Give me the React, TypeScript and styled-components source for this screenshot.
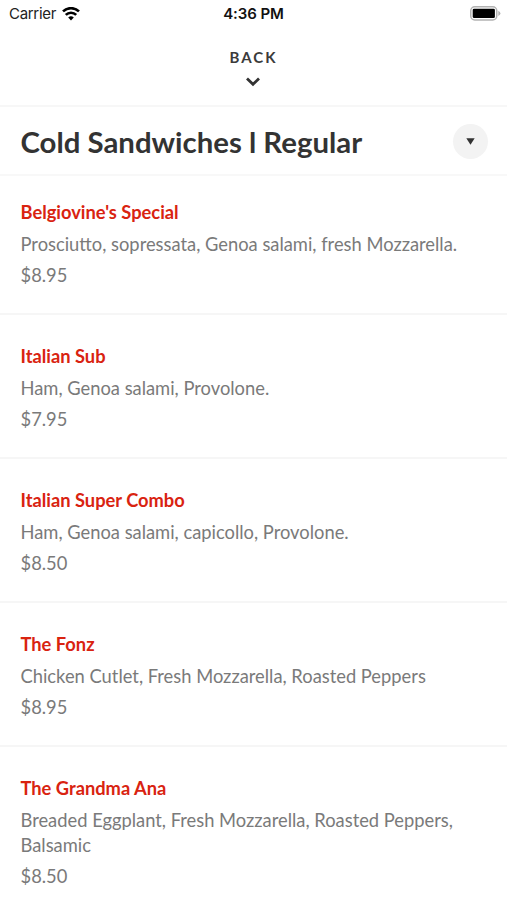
import React from "react";
import styled, { createGlobalStyle } from "styled-components";

const GlobalStyle = createGlobalStyle`
  * { box-sizing: border-box; }
  body { margin: 0; background: #fff; font-family: Lato, sans-serif; overflow: hidden; }
  h1, h2, p { margin: 0; }
`;
const Screen = styled.main`
  width: 507px;
  height: 900px;
  overflow: hidden;
  display: flex;
  flex-direction: column;
  background: #fff;
`;
const StatusBar = styled.header`
  height: 27px;
  flex: none;
  display: grid;
  grid-template-columns: 1fr auto 1fr;
  align-items: center;
  padding: 0 6px 0 9px;
  font: 15px Inter, sans-serif;
  color: #222;
`;
const Carrier = styled.div`
  display: flex;
  align-items: center;
  gap: 6px;
  letter-spacing: -0.3px;
`;
const Time = styled.div`
  font-weight: 600;
  letter-spacing: -0.08px;
  margin-right: 3px;
  color: #111;
`;
const Battery = styled.div`
  display: flex;
  justify-content: flex-end;
`;
const BackButton = styled.button`
  height: 80px;
  flex: none;
  border: 0;
  border-bottom: 2px solid #f7f7f7;
  padding: 20px 0 0;
  background: none;
  display: flex;
  flex-direction: column;
  align-items: center;
  gap: 10px;
  font: 700 15px/20px Lato, sans-serif;
  letter-spacing: 1.95px;
  color: #3b3b3b;

  svg { margin-right: 1px; }
`;
const TitleBar = styled.section`
  height: 69px;
  flex: none;
  display: flex;
  align-items: center;
  justify-content: space-between;
  padding: 1px 19px 0 20.5px;
  border-bottom: 2px solid #f8f8f8;
`;
const Title = styled.h1`
  font-size: 29.35px;
  line-height: 36px;
  padding-top: 1px;
  font-weight: 700;
  color: #333;
`;
const Dropdown = styled.button`
  width: 35px;
  height: 35px;
  border: 0;
  padding: 0;
  border-radius: 50%;
  background: #f3f3f3;
  display: grid;
  place-items: center;
`;
const Item = styled.article<{ $first?: boolean }>`
  height: ${(p) => (p.$first ? 139 : 144)}px;
  flex: none;
  padding: ${(p) => (p.$first ? 24 : 29)}px 20px 0 20.5px;
  border-bottom: 2px solid #f6f6f6;
  &:last-child { height: auto; border: 0; }
`;
const Name = styled.h2`
  font-size: 18.3px;
  line-height: 25px;
  font-weight: 700;
  color: #d92310;
`;
const Description = styled.p`
  margin-top: 7px;
  font-size: 18.33px;
  line-height: 25px;
  color: #7a7a7a;
`;
const Price = styled(Description)`
  margin-top: 6px;
`;

const items = [
  ["Belgiovine's Special", "Prosciutto, sopressata, Genoa salami, fresh Mozzarella.", "$8.95"],
  ["Italian Sub", "Ham, Genoa salami, Provolone.", "$7.95"],
  ["Italian Super Combo", "Ham, Genoa salami, capicollo, Provolone.", "$8.50"],
  ["The Fonz", "Chicken Cutlet, Fresh Mozzarella, Roasted Peppers", "$8.95"],
  ["The Grandma Ana", "Breaded Eggplant, Fresh Mozzarella, Roasted Peppers, Balsamic", "$8.50"],
];

export default function App() {
  return (
    <Screen>
      <GlobalStyle />
      <StatusBar>
        <Carrier>
          Carrier
          <svg width="18" height="14" viewBox="0 0 18 14" fill="none" stroke="#000" strokeWidth="2.6">
            <path d="M1 4.4a11.5 11.5 0 0 1 16 0M3.8 7.9a7.3 7.3 0 0 1 10.4 0" />
            <path d="M6.2 10.5a4 4 0 0 1 5.6 0L9 13.4Z" fill="#000" stroke="none" />
          </svg>
        </Carrier>
        <Time>4:36 PM</Time>
        <Battery>
          <svg width="31" height="15" viewBox="0 0 31 15">
            <rect x=".75" y=".75" width="26" height="13.2" rx="4" fill="#fff" stroke="#b2b2b2" strokeWidth="1.5" />
            <rect x="2.7" y="2.7" width="22.2" height="9.4" rx="1.4" />
            <path d="M28.3 4.8q4.3 2.6 0 5.2Z" fill="#b2b2b2" />
          </svg>
        </Battery>
      </StatusBar>
      <BackButton>
        BACK
        <svg width="14" height="10" viewBox="0 0 14 10" fill="none" stroke="#333" strokeWidth="2.8">
          <path d="m1 1.5 6 5.8 6-5.8" />
        </svg>
      </BackButton>
      <TitleBar>
        <Title>Cold Sandwiches l Regular</Title>
        <Dropdown aria-label="Choose menu">
          <svg width="9" height="7" viewBox="0 0 9 7"><path d="M.3.3h8.4L4.5 6.7Z" fill="#333" /></svg>
        </Dropdown>
      </TitleBar>
      {items.map(([name, description, price], i) => (
        <Item key={name} $first={i === 0}>
          <Name>{name}</Name>
          <Description>{description}</Description>
          <Price>{price}</Price>
        </Item>
      ))}
    </Screen>
  );
}
